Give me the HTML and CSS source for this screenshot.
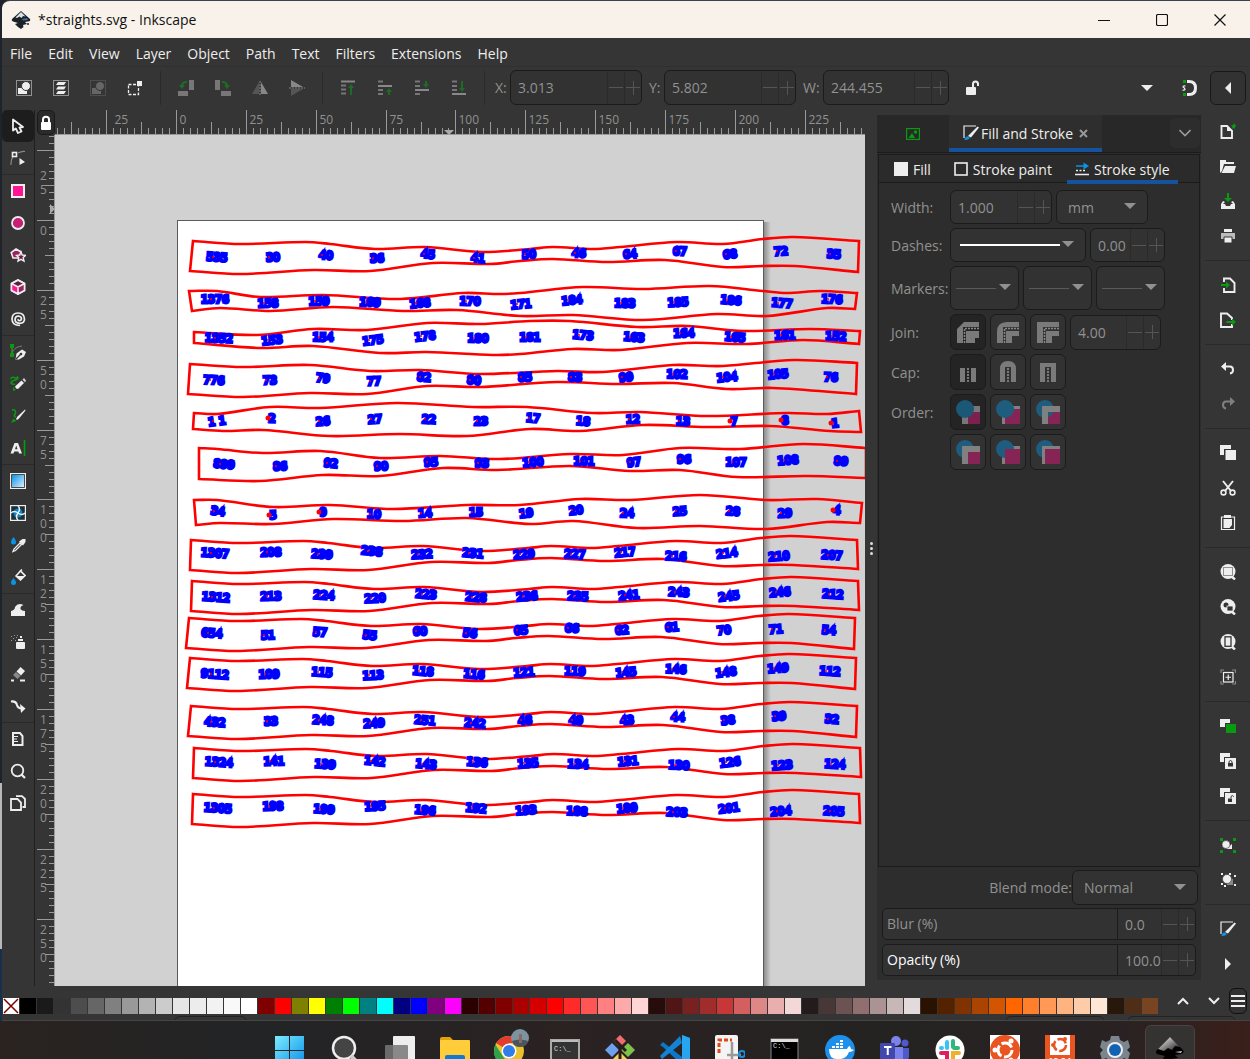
FILE: index.html
```html
<!DOCTYPE html>
<html lang="en">
<head>
    <meta charset="UTF-8">
    <meta name="viewport" content="width=device-width, initial-scale=1">
    <title>*straights.svg - Inkscape</title>
    <link rel="stylesheet" href="styles.css">
</head>
<body>
    <div class="window">
        <header class="titlebar">
            <svg class="app-logo" width="20" height="20" viewBox="0 0 20 20">
                <path d="M10 1 L19 9 Q20 11 17 11.500 L14 12 L16 14 L12 15 L12.500 17 L10 19 L7 17 L4 14 L7 13 L2 11.500 Q0 10.500 1 9 Z" fill="#1c2126"/>
                <path d="M10 2 L14.500 6.500 L12 6 L10.500 8 L8.500 6.500 L6 8 L4.500 7.500 Z" fill="#d9e2ea"/>
                <path d="M11 9 L16 8 L17 10 L12 10.500 Z" fill="#3d6ea8"/>
                <circle cx="17" cy="14" r="1" fill="#1c2126"/>
            </svg>
            <h1>*straights.svg - Inkscape</h1>
            <div class="window-buttons">
                <button aria-label="Minimize"><svg width="12" height="12"><path d="M0 6.500H12" stroke="#111"/></svg></button>
                <button aria-label="Maximize"><svg width="12" height="12"><rect x=".5" y=".5" width="11" height="11" rx="1.500" fill="none" stroke="#111" stroke-width="1.200"/></svg></button>
                <button aria-label="Close"><svg width="12" height="12"><path d="M.5 .5L11.500 11.500M11.500 .5L.5 11.500" stroke="#111" stroke-width="1.200"/></svg></button>
            </div>
        </header>

        <nav class="menubar">
            <a href="#">File</a>
            <a href="#">Edit</a>
            <a href="#">View</a>
            <a href="#">Layer</a>
            <a href="#">Object</a>
            <a href="#">Path</a>
            <a href="#">Text</a>
            <a href="#">Filters</a>
            <a href="#">Extensions</a>
            <a href="#">Help</a>
        </nav>

        <div class="toolbar">
            <div class="tool-group">
                <button aria-label="Select all"><svg width="16" height="16"><rect x=".5" y=".5" width="15" height="15" fill="none" stroke="#eee" stroke-dasharray="1 1"/><rect x="2" y="8" width="9" height="6" fill="#eee"/><circle cx="10" cy="6" r="4.500" fill="#eee" stroke="#353535"/></svg></button>
                <button aria-label="Select all in all layers"><svg width="16" height="16"><rect x=".5" y=".5" width="15" height="15" fill="none" stroke="#eee" stroke-dasharray="1 1"/><path d="M5 2H13L11 5H3ZM5 6.500H13L11 9.500H3ZM5 11H13L11 14H3Z" fill="#eee"/></svg></button>
                <button aria-label="Deselect" disabled><svg width="16" height="16"><rect x=".5" y=".5" width="15" height="15" fill="none" stroke="#666" stroke-dasharray="1 1"/><rect x="2" y="8" width="9" height="6" fill="#666"/><circle cx="10" cy="6" r="4.500" fill="#666" stroke="#353535"/></svg></button>
                <button aria-label="Touch selection"><svg width="16" height="16"><rect x="1.500" y="4.500" width="10" height="10" fill="none" stroke="#eee" stroke-width="1.300" stroke-dasharray="3 1.500"/><rect x="10" y="1" width="5" height="5" fill="#eee"/></svg></button>
            </div>
            <div class="tool-group">
                <button aria-label="Rotate left"><svg width="16" height="16"><path d="M11 0H16V10H11ZM0 11H10V16H0Z" fill="#777"/><path d="M9 2Q4 2 4 6" fill="none" stroke="#1d6b25" stroke-width="2"/><path d="M1 5H7L4 9Z" fill="#1d6b25"/></svg></button>
                <button aria-label="Rotate right"><svg width="16" height="16"><path d="M0 0H5V10H0ZM6 11H16V16H6Z" fill="#777"/><path d="M7 2Q12 2 12 6" fill="none" stroke="#1d6b25" stroke-width="2"/><path d="M9 5H15L12 9Z" fill="#1d6b25"/></svg></button>
                <button aria-label="Flip horizontal"><svg width="16" height="16"><path d="M7 2V14H0Z" fill="#555"/><path d="M9 2V14H16Z" fill="#888"/><path d="M8 1V16" stroke="#888" stroke-dasharray="2 1"/></svg></button>
                <button aria-label="Flip vertical"><svg width="16" height="16"><path d="M2 0L14 7H2Z" fill="#888"/><path d="M2 16L14 9H2Z" fill="#555"/><path d="M0 8H16" stroke="#888" stroke-dasharray="2 1"/></svg></button>
            </div>
            <div class="tool-group">
                <button aria-label="Raise to top"><svg width="16" height="16"><path d="M1 1.500H15" stroke="#888" stroke-width="2"/><path d="M1 5.500H6M1 9.500H6M1 13.500H6" stroke="#777" stroke-width="2"/><path d="M11 7V15" stroke="#1d6b25" stroke-width="2"/><path d="M8 8L11 4L14 8Z" fill="#1d6b25"/></svg></button>
                <button aria-label="Raise"><svg width="16" height="16"><path d="M1 6H15" stroke="#888" stroke-width="2"/><path d="M1 1.500H6M1 10H6M1 14H6" stroke="#777" stroke-width="2"/><path d="M12 10V15" stroke="#1d6b25" stroke-width="2"/><path d="M9 12L12 8L15 12Z" fill="#1d6b25"/></svg></button>
                <button aria-label="Lower"><svg width="16" height="16"><path d="M1 10H15" stroke="#888" stroke-width="2"/><path d="M1 1.500H6M1 6H6M1 14H6" stroke="#777" stroke-width="2"/><path d="M12 1V5" stroke="#1d6b25" stroke-width="2"/><path d="M9 4L12 8L15 4Z" fill="#1d6b25"/></svg></button>
                <button aria-label="Lower to bottom"><svg width="16" height="16"><path d="M1 14H15" stroke="#888" stroke-width="2"/><path d="M1 1.500H6M1 6H6M1 10H6" stroke="#777" stroke-width="2"/><path d="M11 1V9" stroke="#1d6b25" stroke-width="2"/><path d="M8 8L11 12L14 8Z" fill="#1d6b25"/></svg></button>
            </div>
            <div class="coords">
                <label for="pos-x">X:</label>
                <div class="spin"><input type="text" id="pos-x" value="3.013"><button class="minus" aria-label="Decrease X"></button><button class="plus" aria-label="Increase X"></button></div>
                <label for="pos-y">Y:</label>
                <div class="spin"><input type="text" id="pos-y" value="5.802"><button class="minus" aria-label="Decrease Y"></button><button class="plus" aria-label="Increase Y"></button></div>
                <label for="pos-w">W:</label>
                <div class="spin"><input type="text" id="pos-w" value="244.455"><button class="minus" aria-label="Decrease width"></button><button class="plus" aria-label="Increase width"></button></div>
                <button class="lock-ratio" aria-label="Lock ratio"><svg width="16" height="16"><rect x="1" y="7" width="10" height="8" rx="1" fill="#eee"/><path d="M8 8V4Q8 1.500 10.500 1.500Q13 1.500 13 4V6" fill="none" stroke="#eee" stroke-width="2"/></svg></button>
            </div>
            <div class="snap-tools">
                <button aria-label="More"><svg width="12" height="6"><path d="M0 0H12L6 6Z" fill="#eee"/></svg></button>
                <button aria-label="Snap"><svg width="16" height="18"><path d="M6 2.500H8Q14.500 2.500 14.500 9Q14.500 15.500 8 15.500H6" fill="none" stroke="#eee" stroke-width="3"/><path d="M4.500 7Q2 6.500 2 8Q4 9 4 10.500Q3.500 11.500 1.500 11" fill="none" stroke="#eee" stroke-width="1.200"/><rect x="2" y="1" width="3" height="3" fill="#0a9a12"/><rect x="2" y="14" width="3" height="3" fill="#0a9a12"/></svg></button>
                <button class="framed" aria-label="Hide snap bar"><svg width="6" height="12"><path d="M6 0V12L0 6Z" fill="#eee"/></svg></button>
            </div>
        </div>

        <main class="workspace">
            <aside class="toolbox">
                <div class="tools">
                    <button class="active" aria-label="Selector"><svg width="16" height="16"><path d="M3 1.500V12.500L5.800 10.500L8 15L11.500 13.500L9.500 9.500L13 9Z" fill="none" stroke="#eee" stroke-width="1.800" stroke-linejoin="round"/></svg></button>
                    <button aria-label="Node editor"><svg width="16" height="16"><path d="M1 15Q1 9 3 7M8 3Q12 1 15 1.500" fill="none" stroke="#888" stroke-width="1.200"/><rect x="2.500" y="2.500" width="4" height="4" fill="none" stroke="#eee" stroke-width="1.600"/><path d="M9.500 8L15 12L9.500 15Z" fill="#eee"/></svg></button>
                </div>
                <div class="tools">
                    <button aria-label="Rectangle"><svg width="16" height="16"><rect x="2" y="2" width="12" height="12" fill="#ff1493" stroke="#eee" stroke-width="2"/></svg></button>
                    <button aria-label="Ellipse"><svg width="16" height="16"><circle cx="8" cy="8" r="6" fill="#c71f76" stroke="#eee" stroke-width="1.800"/></svg></button>
                    <button aria-label="Star"><svg width="16" height="16"><path d="M6 2L11 5L9.500 11L3 11L1.200 5.500Z" fill="#a0215f" stroke="#eee" stroke-width="1.600"/><path d="M11 5L12.200 8L15.500 8.400L13.200 10.600L14 14L11 12.300L8 14L8.800 10.600L6.500 8.400L9.800 8Z" fill="#6e1c47" stroke="#eee" stroke-width="1.400"/></svg></button>
                    <button aria-label="3D box"><svg width="16" height="16"><path d="M8 1L14.500 4.500V11.500L8 15L1.500 11.500V4.500Z" fill="#5f2040" stroke="#eee" stroke-width="1.600"/><path d="M2 5L8 8V14.500L2 11.500Z" fill="#ff1493"/><path d="M14 5L8 8V14.500L14 11.500Z" fill="#a0215f"/><path d="M1.500 4.500L8 8L14.500 4.500M8 8V15M8 1L14.500 4.500V11.500L8 15L1.500 11.500V4.500Z" fill="none" stroke="#eee" stroke-width="1.600"/></svg></button>
                    <button aria-label="Spiral"><svg width="16" height="16"><path d="M10 14.500Q2 14.500 2 8Q2 2 8 2Q14.500 2 14.500 8.500Q14 12.500 9.500 12.300Q4.800 12 5 8.300Q5.300 5 8.500 5Q11.500 5.300 11.500 8Q11 10 9 9.700Q7.800 9.300 8.200 8" fill="none" stroke="#eee" stroke-width="1.700"/></svg></button>
                </div>
                <div class="tools">
                    <button aria-label="Pen"><svg width="16" height="16"><path d="M2 3V12M2 10Q3 3 12 2" fill="none" stroke="#777" stroke-width="1"/><path d="M0 0H4V4H0Z" fill="#0a9a12"/><path d="M0 9H4V13H0ZM1.500 3H2.500V10H1.500Z" fill="#0a9a12"/><path d="M5.500 15.500L6.500 9.500L12 5.500L16 8L14 12.500L9 15.500Z" fill="#eee"/><path d="M6 15L11 10" stroke="#353535" stroke-width="1.200"/><circle cx="11" cy="10" r="1.300" fill="#353535"/></svg></button>
                    <button aria-label="Pencil"><svg width="16" height="16"><path d="M.5 3Q2 .5 4 1.500T7.500 1Q9 3 5 4T1 7Q3 9 5 8" fill="none" stroke="#0a9a12" stroke-width="1.500"/><path d="M3 15L3 11L6 14Z" fill="#0a9a12"/><path d="M5 10.500L11.500 4.500L14 7L8 13Q5.500 13 5 10.500Z" fill="#eee"/><path d="M12.500 3.500L14 2L16 4.500L15 6.500Z" fill="#ccc"/></svg></button>
                    <button aria-label="Calligraphy"><svg width="16" height="16"><path d="M2 2Q6 1 5.500 5Q3 9 6 9" fill="none" stroke="#0a9a12" stroke-width="1.600"/><path d="M1 15L3.500 10.500L6.500 13Z" fill="#0a9a12"/><path d="M6 11L7.500 8.500L15 1.500L15.500 2.500L9 10.500L7 12Z" fill="#eee"/></svg></button>
                    <button aria-label="Text"><svg width="16" height="16"><path d="M.5 13.500L4.500 3H8L12 13.500H9L8.300 11.500H4.200L3.500 13.500ZM5 9.300H7.500L6.250 5.500Z" fill="#eee" fill-rule="evenodd"/><path d="M14.500 0V16" stroke="#0a9a12" stroke-width="1.600"/></svg></button>
                </div>
                <div class="tools">
                    <button aria-label="Gradient"><svg width="16" height="16"><defs><linearGradient id="grad" x1="0" y1="0" x2="1" y2="1"><stop offset="0" stop-color="#0a94e6"/><stop offset="1" stop-color="#d9efff"/></linearGradient></defs><rect x=".6" y=".6" width="14.800" height="14.800" fill="#222" stroke="#eee" stroke-width="1.200"/><rect x="2" y="2" width="12" height="12" fill="url(#grad)"/></svg></button>
                    <button aria-label="Mesh"><svg width="16" height="16"><rect x=".6" y=".6" width="14.800" height="14.800" fill="#1d3038" stroke="#eee" stroke-width="1.200"/><circle cx="8" cy="8" r="4.500" fill="#0a84cc"/><path d="M8 8Q11 4 8 1M8 8Q12 11 15 8M8 8Q5 12 8 15M8 8Q4 5 1 8" fill="none" stroke="#eee" stroke-width="1.500"/></svg></button>
                    <button aria-label="Dropper"><svg width="16" height="16"><path d="M3.500 0Q6 3 6 5A2.500 2.500 0 0 1 1 5Q1 3 3.500 0Z" fill="#0a94e6"/><path d="M3 14.500L4 12L10 6L11.500 7.500L5.500 13.500Z" fill="none" stroke="#eee" stroke-width="1.300"/><path d="M9 4.500L12.500 2L15.500 2L15.500 5L13 8.500Z" fill="#eee"/></svg></button>
                    <button aria-label="Paint bucket"><svg width="16" height="16"><path d="M3.500 9Q6 12 6 13.500A2.500 2.500 0 0 1 1 13.500Q1 12 3.500 9Z" fill="#0a94e6"/><path d="M6 7L10.500 2L15 6.500L10.500 11Z" fill="none" stroke="#eee" stroke-width="1.600"/><path d="M6 7H15L10.500 11.500Z" fill="#eee"/><path d="M10 2.500L12 .5" stroke="#eee" stroke-width="1.500"/></svg></button>
                </div>
                <div class="tools">
                    <button aria-label="Tweak"><svg width="16" height="16"><path d="M1 14V9Q5 8 5 5Q8 0 13.500 3Q10 4 10.500 7Q11.500 9 15 9V14Z" fill="#eee"/></svg></button>
                    <button aria-label="Spray"><svg width="16" height="16"><rect x="6" y="8" width="9" height="7" rx="1" fill="#eee"/><path d="M8 5H13V7H8ZM10 2H12V4H10Z" fill="#eee"/><path d="M1 2H2V3H1ZM4 1H5V2H4ZM3 4H4V5H3ZM6 3H7V4H6ZM1 6H2V7H1ZM5 6H6V7H5ZM7 1H8V2H7Z" fill="#999"/></svg></button>
                    <button aria-label="Eraser"><svg width="16" height="16"><path d="M10.500 1L15 5L11 9.500L6.500 5.500Z" fill="#eee"/><path d="M6 6L10.500 10L7.500 13L3 9Z" fill="#888"/><path d="M1 14.500H4M10 14.500H15" stroke="#eee" stroke-width="1.800"/></svg></button>
                    <button aria-label="Connector"><svg width="16" height="16"><path d="M1 3.500Q6 3 7 7Q8 10.500 12 10.500" fill="none" stroke="#eee" stroke-width="2.200"/><path d="M10 6L15.500 10.500L11 15Z" fill="#eee"/></svg></button>
                </div>
                <div class="tools">
                    <button aria-label="Measure"><svg width="16" height="16"><path d="M3 2H10L12.500 5V14H3Z" fill="none" stroke="#eee" stroke-width="2"/><path d="M4 5.500H8M4 8H7M4 10.500H8" stroke="#eee" stroke-width="1.200"/></svg></button>
                    <button aria-label="Zoom"><svg width="16" height="16"><circle cx="7.500" cy="7.500" r="5.800" fill="none" stroke="#eee" stroke-width="1.800"/><path d="M11.500 11.500L15 15" stroke="#eee" stroke-width="2.200"/></svg></button>
                    <button aria-label="Pages"><svg width="16" height="16"><path d="M1 4H7.500L11 7.500V15H1Z" fill="none" stroke="#eee" stroke-width="1.800"/><path d="M6 1.200H12L15 4V12H12.500" fill="none" stroke="#eee" stroke-width="1.800"/></svg></button>
                </div>
            </aside>

            <section class="canvas-area">
                <button class="guide-lock" aria-label="Lock guides"><svg width="12" height="16"><rect x="1" y="7" width="10" height="8" rx="1" fill="#fff"/><path d="M3 8V4.500Q3 1.800 6 1.800Q9 1.800 9 4.500V8" fill="none" stroke="#fff" stroke-width="2"/></svg></button>
                <svg class="ruler" id="ruler-h"></svg>
                <svg class="ruler" id="ruler-v"></svg>
                <svg class="canvas" id="canvas">
                    <defs>
                        <linearGradient id="page-shadow"><stop offset="0" stop-color="#8e8e8e"/><stop offset="1" stop-color="#d1d1d1"/></linearGradient>
                    </defs>
                    <rect x="709" y="87" width="7" height="100%" fill="url(#page-shadow)"/>
                    <rect x="122.500" y="85.500" width="586" height="1200" fill="#fff" stroke="#5b5b5b"/>
                    <g id="strips" transform="translate(-55 -135)"></g>
                </svg>
            </section>

            <div class="splitter"><i></i><i></i><i></i></div>

            <aside class="dock">
                <div class="dock-tabs">
                    <button class="dock-tab image-tab" aria-label="Image"><svg width="14" height="12"><rect x=".6" y=".6" width="12.800" height="10.800" fill="none" stroke="#0a9a12" stroke-width="1.200"/><path d="M2.500 10L6 5L9 10Z" fill="#0a9a12"/><circle cx="9.500" cy="4" r="1.800" fill="#0a9a12"/></svg></button>
                    <button class="dock-tab current"><svg width="16" height="16"><path d="M1 13V1H13" fill="none" stroke="#eee" stroke-width="1.200"/><path d="M5 11L14.500 1.500L16 2.500L8 12.500Z" fill="#eee"/><path d="M1.500 15Q2 11 5 11.500L7 13Q5 15.500 1.500 15Z" fill="#0a94e6"/></svg><span>Fill and Stroke</span><svg class="close" width="9" height="9"><path d="M1 1L8 8M8 1L1 8" stroke="#999" stroke-width="2"/></svg></button>
                    <button class="dock-menu" aria-label="Dialogs"><svg width="12" height="8"><path d="M.5 1L6 6.500L11.500 1" fill="none" stroke="#999" stroke-width="1.600"/></svg></button>
                </div>

                <div class="panel">
                    <div class="sub-tabs">
                        <button><svg width="14" height="14"><rect width="14" height="14" fill="#eee"/></svg>Fill</button>
                        <button><svg width="14" height="14"><rect x="1" y="1" width="12" height="12" fill="none" stroke="#eee" stroke-width="1.600"/></svg>Stroke paint</button>
                        <button class="current"><svg width="14" height="14"><path d="M1 4H9" stroke="#0a94e6" stroke-width="1.600"/><path d="M8.500 .5L14 4L8.500 7.500Z" fill="#0a94e6"/><path d="M1 8.500H10" stroke="#eee" stroke-width="1.400" stroke-dasharray="2 1.500"/><path d="M0 12.500H14" stroke="#eee" stroke-width="1.400"/></svg>Stroke style</button>
                    </div>

                    <form class="stroke-form">
                        <div class="row short">
                            <label for="stroke-width">Width:</label>
                            <div class="spin width-spin"><input type="text" id="stroke-width" value="1.000"><button type="button" class="minus" aria-label="Decrease"></button><button type="button" class="plus" aria-label="Increase"></button></div>
                            <div class="drop unit"><select aria-label="Unit"><option>mm</option><option>px</option></select></div>
                        </div>
                        <div class="row short">
                            <label for="dashes">Dashes:</label>
                            <div class="drop dashes"><select id="dashes"><option></option></select></div>
                            <div class="spin offset-spin"><input type="text" aria-label="Dash offset" value="0.00"><button type="button" class="minus" aria-label="Decrease"></button><button type="button" class="plus" aria-label="Increase"></button></div>
                        </div>
                        <div class="row markers">
                            <label for="marker-start">Markers:</label>
                            <div class="drop marker"><select id="marker-start"><option></option></select></div>
                            <div class="drop marker"><select aria-label="Mid marker"><option></option></select></div>
                            <div class="drop marker"><select aria-label="End marker"><option></option></select></div>
                        </div>
                        <div class="row">
                            <span class="row-label">Join:</span>
                            <button type="button" class="choice on" aria-label="Bevel join"><svg width="22" height="22"><path d="M0 22V8L7 1H22V6H6V22ZM14 22V13H22V17H18V22Z" fill="#7a7a7a"/><path d="M9 22V10H22V15H15V22Z" fill="#7a7a7a"/><path d="M7.500 22V7.500H22" fill="none" stroke="#888" stroke-width="1.500" stroke-dasharray="2 1"/></svg></button>
                            <button type="button" class="choice" aria-label="Round join"><svg width="22" height="22"><path d="M0 22V11Q0 1 10 1H22V6H6V22ZM9 22V10H22V15H15V22Z" fill="#7a7a7a"/><path d="M7.500 22V7.500H22" fill="none" stroke="#888" stroke-width="1.500" stroke-dasharray="2 1"/></svg></button>
                            <button type="button" class="choice" aria-label="Miter join"><svg width="22" height="22"><path d="M0 22V1H22V6H6V22ZM9 22V10H22V15H15V22Z" fill="#7a7a7a"/><path d="M7.500 22V7.500H22" fill="none" stroke="#888" stroke-width="1.500" stroke-dasharray="2 1"/></svg></button>
                            <div class="spin miter-spin"><input type="text" aria-label="Miter limit" value="4.00"><button type="button" class="minus" aria-label="Decrease"></button><button type="button" class="plus" aria-label="Increase"></button></div>
                        </div>
                        <div class="row">
                            <span class="row-label">Cap:</span>
                            <button type="button" class="choice on" aria-label="Butt cap"><svg width="22" height="22"><path d="M3 7H8V21H3ZM14 7H19V21H14Z" fill="#7a7a7a"/><path d="M11 7V21" stroke="#7a7a7a" stroke-width="2" stroke-dasharray="2 1"/></svg></button>
                            <button type="button" class="choice" aria-label="Round cap"><svg width="22" height="22"><path d="M3 21V8Q3 0 11 0Q19 0 19 8V21H14V6H8V21Z" fill="#7a7a7a"/><path d="M11 7V21" stroke="#7a7a7a" stroke-width="2" stroke-dasharray="2 1"/></svg></button>
                            <button type="button" class="choice" aria-label="Square cap"><svg width="22" height="22"><path d="M3 21V2H19V21H14V6H8V21Z" fill="#7a7a7a"/><path d="M11 7V21" stroke="#7a7a7a" stroke-width="2" stroke-dasharray="2 1"/></svg></button>
                        </div>
                        <div class="row">
                            <span class="row-label">Order:</span>
                            <button type="button" class="choice on" aria-label="Fill, stroke, markers"><svg width="24" height="24"><path d="M6 6H24V24H6Z" fill="#777"/><path d="M12 12H24V24H12Z" fill="#7c2050"/><circle cx="9" cy="9" r="9" fill="#1b5777"/></svg></button>
                            <button type="button" class="choice" aria-label="Stroke, fill, markers"><svg width="24" height="24"><path d="M6 6H24V24H6Z" fill="#808080"/><path d="M9 9H24V24H9Z" fill="#872456"/><circle cx="9" cy="9" r="9" fill="#1f5d7e"/></svg></button>
                            <button type="button" class="choice" aria-label="Fill, markers, stroke"><svg width="24" height="24"><path d="M12 12H24V24H12Z" fill="#872456"/><circle cx="9" cy="9" r="9" fill="#1f5d7e"/><path d="M6 6H24V12H12V24H6Z" fill="#808080"/></svg></button>
                        </div>
                        <div class="row">
                            <span class="row-label"></span>
                            <button type="button" class="choice" aria-label="Markers, fill, stroke"><svg width="24" height="24"><circle cx="9" cy="9" r="9" fill="#1f5d7e"/><path d="M6 6H24V24H6Z" fill="#808080"/><path d="M12 12H24V24H12Z" fill="#872456"/></svg></button>
                            <button type="button" class="choice" aria-label="Stroke, markers, fill"><svg width="24" height="24"><path d="M6 6H24V24H6Z" fill="#808080"/><circle cx="9" cy="9" r="9" fill="#1f5d7e"/><path d="M9 9H24V24H9Z" fill="#872456"/></svg></button>
                            <button type="button" class="choice" aria-label="Markers, stroke, fill"><svg width="24" height="24"><circle cx="9" cy="9" r="9" fill="#1f5d7e"/><path d="M6 6H24V24H6Z" fill="#808080"/><path d="M9 9H24V24H9Z" fill="#872456"/></svg></button>
                        </div>
                    </form>
                </div>

                <div class="blend">
                    <label for="blend">Blend mode:</label>
                    <div class="drop"><select id="blend"><option>Normal</option><option>Multiply</option></select></div>
                </div>
                <div class="slider-row">
                    <label for="blur">Blur (%)</label>
                    <input type="text" id="blur" value="0.0"><button class="minus" aria-label="Decrease blur"></button><button class="plus" aria-label="Increase blur"></button>
                </div>
                <div class="slider-row lit">
                    <label for="opacity">Opacity (%)</label>
                    <input type="text" id="opacity" value="100.0"><button class="minus" aria-label="Decrease opacity"></button><button class="plus" aria-label="Increase opacity"></button>
                </div>
            </aside>

            <aside class="commands">
                <div class="cmds">
                    <button aria-label="New"><svg width="16" height="16"><path d="M1.500 3H7L12 8V15H1.500Z" fill="none" stroke="#eee" stroke-width="1.900"/><path d="M7 3V8H12Z" fill="#eee"/><path d="M14 0L15 2L17 2L15 4L15 6L14 5L12 6L12.500 4L11 2.500L13 2Z" fill="#0a9a12"/></svg></button>
                    <button aria-label="Open"><svg width="16" height="16"><path d="M0 15V2H6V4H14V6H4L2 13Z" fill="#eee"/><path d="M5 8H16L14 15H1.500Z" fill="#eee"/></svg></button>
                    <button aria-label="Save"><svg width="16" height="16"><path d="M8 0V6" stroke="#0a9a12" stroke-width="2"/><path d="M4 5H12L8 9Z" fill="#0a9a12"/><path d="M3 8L1 11V16H15V11L13 8L11 9L13 11H11L10 13H6L5 11H3L5 9Z" fill="#eee"/></svg></button>
                    <button aria-label="Print"><svg width="16" height="16"><path d="M4 1H12V4H4Z" fill="#eee"/><path d="M1 5H15V11H1Z" fill="#bbb"/><path d="M4 9H12V15H4Z" fill="#eee" stroke="#353535"/></svg></button>
                </div>
                <div class="cmds">
                    <button aria-label="Import"><svg width="16" height="16"><path d="M4 5V1.500H10L14.500 6V15H4V11" fill="none" stroke="#eee" stroke-width="1.900"/><path d="M1 8H6" stroke="#0a9a12" stroke-width="2"/><path d="M6 4.500L10 8L6 11.500Z" fill="#0a9a12"/></svg></button>
                    <button aria-label="Export"><svg width="16" height="16"><path d="M12 12V15H1V1.500H7L12 6V8" fill="none" stroke="#eee" stroke-width="1.900"/><path d="M6.500 10H12" stroke="#0a9a12" stroke-width="2"/><path d="M12 6.500L16 10L12 13.500Z" fill="#0a9a12"/></svg></button>
                </div>
                <div class="cmds">
                    <button aria-label="Undo"><svg width="16" height="16"><path d="M4 5.500H10Q13 5.500 13 9Q13 12 10 12.500" fill="none" stroke="#eee" stroke-width="2"/><path d="M6 1V10L1 5.500Z" fill="#eee"/></svg></button>
                    <button aria-label="Redo"><svg width="16" height="16"><path d="M12 5.500H6Q3 5.500 3 9Q3 12 6 12.500" fill="none" stroke="#808080" stroke-width="2"/><path d="M10 1V10L15 5.500Z" fill="#808080"/></svg></button>
                </div>
                <div class="cmds">
                    <button aria-label="Duplicate"><svg width="16" height="16"><path d="M0 0H11V4H4V10H0Z" fill="#eee"/><rect x="5.500" y="5" width="10.500" height="10" fill="#eee"/></svg></button>
                    <button aria-label="Cut"><svg width="16" height="16"><path d="M3 1L11 11M13 1L5 11" stroke="#eee" stroke-width="2"/><circle cx="3.500" cy="12.500" r="2.400" fill="none" stroke="#eee" stroke-width="1.600"/><circle cx="12.500" cy="12.500" r="2.400" fill="none" stroke="#eee" stroke-width="1.600"/></svg></button>
                    <button aria-label="Paste"><svg width="16" height="16"><path d="M1.500 2V14.500H14.500V2Z" fill="none" stroke="#eee" stroke-width="1.200"/><path d="M4 0H11V3H4ZM3.500 4H12V10L9.500 13H3.500Z" fill="#eee"/></svg></button>
                </div>
                <div class="cmds">
                    <button aria-label="Zoom selection"><svg width="16" height="16"><circle cx="8" cy="7.500" r="7.500" fill="#eee"/><path d="M11 12L15 15.500" stroke="#eee" stroke-width="2.400"/><rect x="3.500" y="3.500" width="9" height="8" fill="none" stroke="#333" stroke-dasharray="1 1"/></svg></button>
                    <button aria-label="Zoom drawing"><svg width="16" height="16"><circle cx="8" cy="7.500" r="7.500" fill="#eee"/><path d="M11 12L15 15.500" stroke="#eee" stroke-width="2.400"/><circle cx="6" cy="6" r="2.500" fill="#333"/><rect x="7" y="7" width="6" height="5" fill="#333" stroke="#eee" stroke-width=".8"/></svg></button>
                    <button aria-label="Zoom page"><svg width="16" height="16"><circle cx="8" cy="7.500" r="7.500" fill="#eee"/><path d="M11 12L15 15.500" stroke="#eee" stroke-width="2.400"/><rect x="5" y="2.800" width="6" height="9.500" fill="#eee" stroke="#333" stroke-width="1.300"/></svg></button>
                    <button aria-label="Center page"><svg width="16" height="16"><path d="M1 4V1H4M12 1H15.500V4M1 12V15H4M12 15H15.500V12" fill="none" stroke="#888" stroke-width="1.200"/><rect x="3.500" y="3.500" width="9.500" height="9.500" fill="none" stroke="#eee" stroke-width="1.200"/><path d="M8.250 5.500V11M5.500 8.250H11" stroke="#eee" stroke-width="1.200"/></svg></button>
                </div>
                <div class="cmds">
                    <button aria-label="Clone"><svg width="16" height="16"><path d="M0 1H10V5H5V9H0Z" fill="#eee"/><rect x="6" y="6" width="10" height="9" fill="#0a9a12"/></svg></button>
                    <button aria-label="Group"><svg width="16" height="16"><path d="M0 0H10V4H4V9H0Z" fill="#eee"/><rect x="5" y="5" width="11" height="11" fill="#eee"/><path d="M8 10H13V13.500H8Z" fill="#333"/><path d="M9 10V8.500Q10.500 6.500 12 8.500V10" fill="none" stroke="#333"/></svg></button>
                    <button aria-label="Ungroup"><svg width="16" height="16"><path d="M0 0H10V4H4V9H0Z" fill="#eee"/><rect x="5" y="5" width="11" height="11" fill="#eee"/><path d="M8 10.500H12V14H8Z" fill="#333"/><path d="M11 10V8.500Q12.500 6.500 13.500 8.500V9" fill="none" stroke="#333"/></svg></button>
                </div>
                <div class="cmds">
                    <button aria-label="Group objects"><svg width="16" height="16"><path d="M0 1H3V4H0ZM13 1H16V4H13ZM0 13H3V16H0ZM13 13H16V16H13Z" fill="#0a9a12"/><path d="M6 12H12V7Z" fill="#eee"/><circle cx="6" cy="7.500" r="4" fill="#eee" stroke="#353535" stroke-width=".6"/></svg></button>
                    <button aria-label="Ungroup objects"><svg width="16" height="16"><path d="M7 7H13V13H7Z" fill="#888"/><circle cx="7" cy="7" r="4.500" fill="#eee" stroke="#353535" stroke-width=".6"/><path d="M1 1H3V3H1ZM9 1H11V3H9ZM14 3H16V5H14ZM1 11H3V13H1ZM14 12H16V14H14ZM4 13H6V15H4Z" fill="#eee"/></svg></button>
                </div>
                <div class="cmds">
                    <button aria-label="Fill and stroke"><svg width="16" height="16"><path d="M1 13V1H13" fill="none" stroke="#eee" stroke-width="1.200"/><path d="M5 11L14.500 1.500L16 2.500L8 12.500Z" fill="#eee"/><path d="M1.500 15Q2 11 5 11.500L7 13Q5 15.500 1.500 15Z" fill="#0a94e6"/></svg></button>
                    <button aria-label="More commands"><svg width="6" height="12"><path d="M0 0V12L6 6Z" fill="#eee"/></svg></button>
                </div>
            </aside>
        </main>

        <footer class="palette">
            <div class="swatches" id="swatches"></div>
            <div class="palette-buttons">
                <button aria-label="Previous colors"><svg width="12" height="8"><path d="M1 7L6 2L11 7" fill="none" stroke="#eee" stroke-width="2"/></svg></button>
                <button aria-label="Next colors"><svg width="12" height="8"><path d="M1 1L6 6L11 1" fill="none" stroke="#eee" stroke-width="2"/></svg></button>
                <button class="framed" aria-label="Palette menu"><svg width="14" height="14"><path d="M0 2H14M0 7H14M0 12H14" stroke="#eee" stroke-width="2"/></svg></button>
            </div>
        </footer>
        <div class="statusbar"><span class="style-box"></span><span class="zoom-box"></span><span class="rotate-box"></span></div>
    </div>

    <nav class="taskbar">
        <button aria-label="Start"><svg width="30" height="30"><defs><linearGradient id="win" x1="0" y1="0" x2="1" y2="1"><stop offset="0" stop-color="#7cecff"/><stop offset="1" stop-color="#0a90ea"/></linearGradient></defs><path d="M0 1H14V15H0ZM15 1H29V15H15ZM0 16H14V30H0ZM15 16H29V30H15Z" fill="url(#win)"/></svg></button>
        <button aria-label="Search"><svg width="30" height="30"><circle cx="14" cy="13" r="11" fill="#444" stroke="#eee" stroke-width="2.500"/><path d="M21 21L28 28" stroke="#ccc" stroke-width="4"/></svg></button>
        <button aria-label="Task view"><svg width="30" height="30"><rect x="8" y="1" width="22" height="24" rx="1" fill="#eee"/><rect x="0" y="10" width="23" height="20" rx="1" fill="#777" opacity=".85"/></svg></button>
        <button aria-label="File Explorer"><svg width="30" height="30"><path d="M0 4Q0 2 2 2H10L13 5V12H0Z" fill="#e3a208"/><rect y="5" width="30" height="25" rx="1" fill="#fecd39"/><rect x="5" y="20" width="20" height="10" rx="2" fill="#1279d3"/></svg></button>
        <button aria-label="Chrome"><svg width="40" height="36" viewBox="0 0 40 36"><circle cx="19" cy="22" r="15" fill="#eac02c"/><path d="M19 22L6 14Q11 7 19 7Q28 7 32 14H19Z" fill="#e33b2e"/><path d="M5 15L14 29L19 36Q4 36 4 22Q4 18 6 14Z" fill="#2ba24c"/><circle cx="19" cy="22" r="7.500" fill="#fff"/><circle cx="19" cy="22" r="6" fill="#2f7de9"/><circle cx="30" cy="9" r="9" fill="#7d93a0"/><path d="M22 12Q30 9 38 12Q36 18 30 18Q24 18 22 12Z" fill="#4b5560"/><rect x="29" y="5" width="3" height="9" fill="#8d6a60"/></svg></button>
        <button aria-label="Terminal"><svg width="30" height="30"><rect x="1" y="5" width="28" height="24" fill="#333" stroke="#aaa" stroke-width="2"/><path d="M2 5H28V7H2Z" fill="#bbb"/><text x="4" y="16" class="tiny">C:\_</text></svg></button>
        <button aria-label="Git"><svg width="30" height="30"><path d="M15 0L21 6L15 12L9 6Z" fill="#ef6e6e"/><path d="M7 8L14 15L7 22L0 15Z" fill="#6ea0ef"/><path d="M23 8L30 15L23 22L16 15Z" fill="#7dc24b"/><path d="M15 17L22 24L15 30L8 24Z" fill="#f0d64e"/><path d="M10 5L21 16M15 10V24" stroke="#2a1c1c" stroke-width="3"/></svg></button>
        <button aria-label="VS Code"><svg width="30" height="30"><path d="M22 0L30 3V27L22 30L3 12L0 10L3 7L22 22Z" fill="#0a78c8"/><path d="M22 8L2 24L0 21L20 1Z" fill="#1583d5"/><path d="M22 0L30 3V27L22 30Z" fill="#28a5ef"/></svg></button>
        <button aria-label="Snipping Tool"><svg width="30" height="30"><rect x="0" y="0" width="23" height="26" rx="2" fill="#f4f4f4"/><path d="M4 18V5H17" fill="none" stroke="#dc4a15" stroke-width="3" stroke-dasharray="4 2"/><path d="M17 7V26M12 20H26" stroke="#999" stroke-width="2.500"/><circle cx="27" cy="19" r="3" fill="none" stroke="#1b8fdc" stroke-width="2"/><path d="M17 25V30" stroke="#1b8fdc" stroke-width="3"/></svg></button>
        <button aria-label="Command Prompt"><svg width="30" height="30"><rect x="1" y="4" width="27" height="24" fill="#000" stroke="#888"/><path d="M1 4H28V7H1Z" fill="#ddd"/><text x="3" y="13" class="tiny">C:\_</text></svg></button>
        <button aria-label="Docker"><svg width="30" height="30"><circle cx="15" cy="15" r="15" fill="#1d90ec"/><path d="M4 14H22Q23 11 25 11L26 14L29 15Q27 17 24 17Q21 25 12 24Q4 24 4 14Z" fill="#fff"/><path d="M7 11H10V13H7ZM11 11H14V13H11ZM15 11H18V13H15ZM11 8H14V10H11ZM15 8H18V10H15ZM15 5H18V7H15Z" fill="#fff"/></svg></button>
        <button aria-label="Teams"><svg width="30" height="30"><circle cx="16" cy="6" r="5" fill="#7b83eb"/><circle cx="25" cy="8" r="3.500" fill="#5059c9"/><path d="M19 13H29V22Q28 27 22 26Z" fill="#5059c9"/><path d="M10 12H23V24Q21 30 14 29Z" fill="#7b83eb"/><rect x="0" y="8" width="15" height="16" rx="1" fill="#4048ae"/><path d="M4 12H11.500M7.750 12V20" stroke="#fff" stroke-width="2"/></svg></button>
        <button aria-label="Slack"><svg width="30" height="30"><circle cx="15" cy="15" r="14.500" fill="#fff"/><g stroke-width="4" stroke-linecap="round"><path d="M12 7V13M6 13H7" stroke="#36c5f0"/><path d="M18 6V12M23 13H19" stroke="#2eb67d"/><path d="M6 18H12V24" stroke="#e01e5a" fill="none"/><path d="M18 24V18H24" stroke="#ecb22e" fill="none"/></g></svg></button>
        <button aria-label="Ubuntu"><svg width="30" height="30"><rect width="30" height="30" fill="#fff"/><circle cx="15" cy="15" r="15" fill="#e95420"/><circle cx="15" cy="15" r="7" fill="none" stroke="#fff" stroke-width="3" stroke-dasharray="12 2.600"/><circle cx="21" cy="6" r="2.500" fill="#fff"/><circle cx="5" cy="15" r="2.500" fill="#fff"/><circle cx="21" cy="25" r="2.500" fill="#fff"/></svg></button>
        <button aria-label="Ubuntu 18.04"><svg width="30" height="30"><rect width="30" height="30" fill="#e95420"/><rect x="5" width="20" height="20" fill="#fff"/><circle cx="15" cy="10" r="6" fill="none" stroke="#e95420" stroke-width="2.500" stroke-dasharray="10 2.500"/><circle cx="20" cy="4" r="2" fill="#e95420"/><circle cx="8" cy="10" r="2" fill="#e95420"/><text x="3" y="29" class="release">18.04</text></svg></button>
        <button aria-label="Settings"><svg width="30" height="30"><path d="M11 1H19L20 5L24 7L28 5L30 12L27 15L30 18L28 25L24 23L20 26L19 29H11L10 26L6 23L2 25L0 18L3 15L0 12L2 5L6 7L10 5Z" fill="#7b858e"/><circle cx="15" cy="15" r="8" fill="#eee"/><circle cx="15" cy="15" r="6" fill="#1262b4"/></svg></button>
        <button class="running" aria-label="Inkscape"><svg width="30" height="30"><defs><linearGradient id="ink" x1="0" y1="0" x2="1" y2="1"><stop offset="0" stop-color="#fff"/><stop offset=".8" stop-color="#444"/></linearGradient></defs><path d="M15 1L28 14Q30 17 26 18L20 19L23 22L16 23L12 26L8 22L10 20L2 18Q0 16 2 14Z" fill="#000"/><path d="M15 1L25 11L20 10L17 14L13 12L9 15L3 13Z" fill="url(#ink)"/><path d="M20 16L27 15L26 17Z" fill="#ccc"/></svg></button>
    </nav>

    <script src="script.js"></script>
</body>
</html>
```
FILE: styles.css
```css
:root {
    --window: #353535;
    --panel: #2d2d2d;
    --dark: #282828;
    --field: #323232;
    --edge: #1b1b1b;
    --line: #2a2a2a;
    --text: #eeeeec;
    --dim: #919190;
    --accent: #15539e;
}

* {
    box-sizing: border-box;
    margin: 0;
    padding: 0;
}

body {
    display: flex;
    flex-direction: column;
    height: 100vh;
    overflow: hidden;
    padding-left: 2px;
    background: linear-gradient(#1f242c 0 783px, #b8b8b8 783px 949px, #16304e 949px);
    color: var(--text);
    font-family: "Open Sans", "Noto Sans", sans-serif;
    font-size: 14px;
}

button {
    display: flex;
    align-items: center;
    justify-content: center;
    background: none;
    border: none;
    color: inherit;
    font: inherit;
}

svg {
    display: block;
    flex: none;
}

input,
select {
    min-width: 0;
    background: none;
    border: none;
    outline: none;
    color: var(--dim);
    font: inherit;
}

.window {
    flex: 1;
    min-height: 0;
    display: flex;
    flex-direction: column;
    background: var(--window);
    border-top: 1px solid #3b4150;
    border-bottom: 1px solid #454545;
    border-radius: 8px 0 0 0;
    overflow: hidden;
}

/* title and menus */
.titlebar {
    flex: none;
    display: flex;
    align-items: center;
    height: 37px;
    padding-left: 9px;
    background: #f8f2eb;
    color: #111;
}

.titlebar h1 {
    flex: 1;
    margin-left: 7px;
    font-size: 14px;
    font-weight: 400;
}

.window-buttons {
    display: flex;
    padding-right: 1px;
}

.window-buttons button {
    width: 58px;
    height: 36px;
}

.menubar {
    flex: none;
    display: flex;
    align-items: center;
    gap: 16px;
    height: 29px;
    padding: 2px 8px 0;
    border-bottom: 1px solid #303030;
}

.menubar a {
    color: var(--text);
    text-decoration: none;
}

/* tool controls bar */
.toolbar {
    flex: none;
    display: flex;
    align-items: center;
    height: 43px;
    padding: 0 0 2px 3px;
}

.tool-group {
    display: flex;
    margin-right: 6px;
    padding-right: 7px;
    border-right: 1px solid var(--line);
}

.tool-group button {
    width: 37px;
    height: 34px;
}

.coords {
    display: flex;
    align-items: center;
    padding-left: 4px;
}

.coords label {
    width: 14px;
    margin-right: 1px;
    color: var(--dim);
}

.coords label[for="pos-w"] {
    width: 19px;
}

.coords .spin {
    width: 132px;
    margin-right: 7px;
}

.coords .spin:nth-of-type(3) {
    width: 126px;
    margin-right: 6px;
}

.lock-ratio {
    width: 36px;
    height: 34px;
}

.snap-tools {
    display: flex;
    align-items: center;
    margin-left: auto;
    padding-right: 4px;
}

.snap-tools button {
    width: 42px;
    height: 34px;
}

.snap-tools .framed {
    width: 36px;
}

.framed {
    border: 1px solid #181818;
    border-radius: 6px;
    background: #323232;
}

.spin {
    display: flex;
    height: 35px;
    background: var(--field);
    border: 1px solid var(--edge);
    border-radius: 6px;
    overflow: hidden;
}

.spin input {
    flex: 1;
    padding-left: 7px;
}

.minus,
.plus {
    flex: none;
    width: 17px;
    border-left: 1px solid var(--line);
    background: linear-gradient(#555, #555) center / 14px 1px no-repeat;
}

.plus {
    background: linear-gradient(#555, #555) center / 14px 1px no-repeat,
                linear-gradient(#555, #555) center / 1px 14px no-repeat;
}

/* work area */
.workspace {
    flex: 1;
    min-height: 0;
    display: flex;
}

.toolbox {
    flex: none;
    width: 33px;
    border-right: 1px solid #1f1f1f;
}

.tools {
    border-bottom: 1px solid var(--line);
}

.tools:last-child {
    border-bottom: none;
}

.tools button {
    width: 32px;
    height: 32px;
}

.tools .active {
    background: #1d1d1d;
    border-radius: 5px;
}

.canvas-area {
    flex: 1;
    min-width: 0;
    display: grid;
    grid-template-columns: 20px 1fr;
    grid-template-rows: 25px 1fr;
}

.guide-lock {
    width: 18px;
    margin-left: 2px;
    border: 1px solid #1a1a1a;
    border-radius: 5px;
    background: #2a2a2a;
}

.ruler {
    width: 100%;
    height: 100%;
    min-height: 0;
    font-size: 12px;
}

.ruler line {
    stroke: #9a9a9a;
}

.ruler text {
    fill: var(--dim);
}

.ruler path {
    fill: #a9a9a9;
}

.canvas {
    width: 100%;
    height: 100%;
    min-height: 0;
    background: #d1d1d1;
}

.canvas .strip {
    fill: none;
    stroke: #f00;
    stroke-width: 2.6px;
}

.canvas circle {
    fill: #f00;
}

.canvas text {
    fill: #00f;
    stroke: #00f;
    stroke-width: 3px;
    font-family: "DejaVu Sans", sans-serif;
    font-size: 11px;
    text-anchor: middle;
}

.splitter {
    flex: none;
    display: flex;
    flex-direction: column;
    align-items: center;
    justify-content: center;
    gap: 2px;
    width: 12px;
}

.splitter i {
    width: 3px;
    height: 3px;
    border-radius: 50%;
    background: #ddd;
}

/* dialog dock */
.dock {
    flex: none;
    width: 324px;
    margin: 5px 0 6px;
    display: flex;
    flex-direction: column;
    background: var(--panel);
}

.dock-tabs {
    display: flex;
    height: 38px;
    background: var(--dark);
    border-bottom: 1px solid var(--edge);
}

.dock-tab {
    height: 37px;
}

.image-tab {
    width: 72px;
}

.dock-tab.current {
    width: 153px;
    gap: 2px;
    padding-top: 3px;
    background: #2e2e2e;
    border-bottom: 4px solid var(--accent);
}

.dock-tab .close {
    margin-left: 4px;
}

.dock-menu {
    width: 30px;
    height: 30px;
    margin: 3px 1px 0 auto;
    border-radius: 5px;
    background: #2d2d2d;
}

.panel {
    flex: 1;
    min-height: 0;
    margin: 1px 1px 0;
    border: 1px solid var(--edge);
}

.sub-tabs {
    display: flex;
    height: 28px;
    padding-left: 7px;
    background: #2b2b2b;
    border-bottom: 1px solid var(--edge);
}

.sub-tabs button {
    gap: 5px;
    height: 29px;
    margin-right: 7px;
    padding: 3px 8px 0;
    border-bottom: 4px solid transparent;
    white-space: nowrap;
}

.sub-tabs .current {
    border-bottom-color: var(--accent);
}

.stroke-form {
    display: flex;
    flex-direction: column;
    gap: 4px;
    padding: 7px 12px;
}

.row {
    display: flex;
    align-items: center;
    gap: 4px;
    height: 36px;
    color: var(--dim);
}

.row.short,
.row.short .spin,
.row.short .drop {
    height: 34px;
}

.row.markers {
    height: 44px;
}

.row label,
.row-label {
    flex: none;
    width: 55px;
    white-space: nowrap;
}

.row .width-spin {
    width: 102px;
}

.row .offset-spin {
    width: 75px;
}

.row .miter-spin {
    width: 91px;
}

.drop {
    position: relative;
    height: 35px;
    background: var(--field);
    border: 1px solid var(--edge);
    border-radius: 6px;
}

.drop select {
    width: 100%;
    height: 100%;
    padding-left: 11px;
    appearance: none;
}

.drop::after {
    content: '';
    position: absolute;
    top: 50%;
    right: 11px;
    margin-top: -4px;
    border: 6px solid transparent;
    border-top-color: var(--dim);
    border-bottom: none;
    pointer-events: none;
}

.drop.unit {
    width: 92px;
}

.drop.dashes {
    width: 136px;
}

.drop.dashes select {
    background: linear-gradient(#fff, #fff) 9px center / 100px 2px no-repeat;
}

.drop.marker {
    width: 69px;
    height: 44px;
}

.drop.marker select {
    background: linear-gradient(#5a5a5a, #5a5a5a) 5px center / 40px 1px no-repeat;
}

.drop.marker::after {
    right: 7px;
}

.choice {
    width: 36px;
    height: 36px;
    border: 1px solid var(--edge);
    border-radius: 6px;
    background: var(--field);
}

.choice.on {
    background: #242424;
}

.blend {
    display: flex;
    align-items: center;
    justify-content: flex-end;
    height: 35px;
    margin: 3px 3px 3px 0;
    color: var(--dim);
}

.blend .drop {
    width: 126px;
}

.slider-row {
    display: flex;
    height: 32px;
    margin: 0 5px 4px;
    background: var(--field);
    border: 1px solid var(--edge);
    border-radius: 5px;
    color: var(--dim);
}

.slider-row label {
    flex: 1;
    padding-left: 4px;
    line-height: 30px;
    border-right: 1px solid var(--edge);
}

.slider-row input {
    width: 43px;
    padding-left: 7px;
}

.slider-row.lit label {
    color: #fff;
}

/* right hand command bar */
.commands {
    flex: none;
    width: 49px;
    padding: 3px 0 0 4px;
}

.cmds {
    margin-bottom: 6px;
    padding-bottom: 7px;
    border-bottom: 1px solid var(--line);
}

.cmds:last-child {
    border-bottom: none;
}

.cmds button {
    width: 45px;
    height: 35px;
}

/* palette */
.palette {
    flex: none;
    display: flex;
    align-items: center;
    justify-content: space-between;
    height: 29px;
    padding: 0 3px 0 1px;
}

.swatches {
    display: flex;
    gap: 1px;
    padding-top: 11px;
}

.swatches button {
    width: 16px;
    height: 16px;
}

.palette-buttons {
    display: flex;
    align-items: center;
}

.palette-buttons button {
    width: 31px;
    height: 26px;
}

.palette-buttons .framed {
    width: 18px;
    border-color: #111;
}

.statusbar {
    flex: none;
    display: flex;
    height: 5px;
    padding-top: 1px;
    overflow: hidden;
}

.statusbar span {
    flex: none;
    height: 30px;
    border: 1px solid #222;
    border-radius: 6px;
}

.style-box {
    width: 73px;
    margin-left: 172px;
}

.zoom-box {
    width: 100px;
    margin-left: auto;
}

.rotate-box {
    width: 109px;
    margin: 0 14px 0 22px;
}

/* desktop taskbar */
.taskbar {
    flex: none;
    display: flex;
    justify-content: flex-end;
    gap: 5px;
    height: 38px;
    margin-left: -2px;
    padding: 4px 55px 0 0;
    overflow: hidden;
    background: linear-gradient(90deg, #2a2320, #222426 20%, #2b2222 45%, #242322 70%, #2a2222 90%, #3a1f1a);
}

.taskbar button {
    align-items: flex-start;
    flex: none;
    width: 50px;
    height: 50px;
    padding-top: 10px;
}

.taskbar button[aria-label="Chrome"] {
    padding-top: 4px;
}

.taskbar .running {
    border: 1px solid #484444;
    border-radius: 6px;
    background: #353232;
}

.tiny {
    fill: #ddd;
    font-size: 7px;
    font-family: "Liberation Mono", monospace;
}

.release {
    fill: #fff;
    font-size: 9px;
    font-weight: 700;
}
```
FILE: script.js
```js
var SVG = 'http://www.w3.org/2000/svg';

function add(parent, name, attrs, text) {
    var el = document.createElementNS(SVG, name);
    for (var key in attrs) el.setAttribute(key, attrs[key]);
    if (text !== undefined) el.textContent = text;
    parent.appendChild(el);
}

// Rulers: one tick per 2.5 mm, labelled every 25 mm
var STEP = 69.87;

function drawRulers() {
    var h = document.getElementById('ruler-h');
    var v = document.getElementById('ruler-v');
    var i, p;
    for (i = -17; i < 100; i++) {
        p = Math.round(121 + i * STEP / 10) + 0.5;
        if (p < 2) continue;
        add(h, 'line', { x1: p, x2: p, y1: i % 10 === 0 ? 0 : i % 5 === 0 ? 12 : 18, y2: 24 });
        if (i % 10 === 0) {
            add(h, 'text', { x: p + (i < 0 ? 8 : 3), y: 14 }, Math.abs(i * 2.5));
        }
    }
    add(h, 'line', { x1: 0, x2: '100%', y1: 24.5, y2: 24.5 });
    add(h, 'path', { d: 'M389 20H399L394 25Z' });

    for (i = -12; i < 110; i++) {
        p = Math.round(85 + i * STEP / 10) + 0.5;
        add(v, 'line', { y1: p, y2: p, x1: i % 10 === 0 ? 2 : i % 5 === 0 ? 10 : 14, x2: 19 });
        if (i % 10 === 0) {
            String(Math.abs(i * 2.5)).split('').forEach(function (digit, n) {
                var shift = i < 0 ? 15 : 0;
                add(v, 'text', { x: 5, y: p + 14 + shift + n * 14 }, digit);
            });
        }
    }
    add(v, 'line', { x1: 19.5, x2: 19.5, y1: 0, y2: '100%' });
    add(v, 'path', { d: 'M15 69L20 74L15 79Z' });
}

// Smooth curve through the points of one edge
function curve(pts) {
    var d = '';
    for (var i = 0; i < pts.length - 1; i++) {
        var a = pts[i - 1] || pts[i], b = pts[i], c = pts[i + 1], e = pts[i + 2] || c;
        var t = (c[0] - b[0]) / 3;
        var s1 = (c[1] - a[1]) / (c[0] - a[0]);
        var s2 = (e[1] - b[1]) / (e[0] - b[0]);
        d += 'C' + (b[0] + t) + ' ' + (b[1] + s1 * t) + ' ' + (c[0] - t) + ' ' + (c[1] - s2 * t) + ' ' + c[0] + ' ' + c[1];
    }
    return d;
}

function points(text, dx, dy) {
    return text.split(' ').map(function (pair) {
        var xy = pair.split(',');
        return [+xy[0] + dx, +xy[1] + dy];
    });
}

// Angle of an edge at x, in degrees
function tilt(pts, x) {
    for (var i = 1; i < pts.length - 1; i++) {
        if (x < pts[i][0]) break;
    }
    return Math.atan2(pts[i][1] - pts[i - 1][1], pts[i][0] - pts[i - 1][0]) * 180 / Math.PI;
}

var WIDE_TOP = '193,241 240,244 305,242 330,244 375,249 425,247 482,252 530,249 553,247 593,249 620,247 677,242 723,244 763,239 793,237 859,241';
var WIDE_BOTTOM = '190,271 240,274 313,270 370,271 433,263 490,264 520,261 553,259 607,262 665,260 723,267 763,266 795,266 858,272';
var BOX_BOTTOM = '192,271 240,274 313,270 370,271 433,263 490,264 520,261 553,259 607,262 665,260 723,267 763,266 795,266 860,270';

// Each strip: top edge, bottom edge, dx, dy, then label,x,y triples
var strips = [
    [WIDE_TOP, WIDE_BOTTOM, 0, 0,
        '535,217,257 30,273,257 40,326,255 36,377,258 45,428,254 41,478,258 50,529,254 46,579,253 64,630,254 67,680,251 68,730,254 72,781,251 35,834,254'],
    ['189,291 217,291 260,297 323,295 400,299 463,293 500,294 520,293 583,287 643,289 710,286 763,291 787,293 820,291 857,293',
        '192,311 220,308 270,311 333,307 403,311 457,310 520,316 573,315 643,320 717,314 767,316 827,308 855,309', 0, 0,
        '1376,215,299 158,268,303 159,319,301 169,370,302 168,420,303 170,470,301 171,521,304 184,572,300 183,625,303 185,678,302 186,731,300 177,782,303 176,832,299'],
    ['194,332 257,335 313,329 367,330 427,323 480,324 530,321 570,321 637,327 687,326 743,331 810,329 860,331',
        '194,343 260,348 313,346 380,353 427,352 493,355 520,354 573,349 620,350 687,343 747,344 803,340 859,344', 0, 0,
        '1352,219,338 153,272,340 154,323,337 175,373,340 178,425,336 180,478,338 181,530,337 173,583,335 163,634,337 164,684,333 165,735,337 161,785,335 152,836,336'],
    ['190,364 243,367 310,365 370,371 420,370 480,374 557,371 603,372 673,365 723,366 793,360 857,363',
        '188,394 243,397 310,393 367,394 427,386 480,387 557,382 617,384 673,383 727,389 773,388 856,394', 0, 0,
        '776,214,380 73,270,380 79,323,378 77,374,381 82,424,377 80,474,380 85,525,377 83,575,377 99,626,377 102,677,374 104,727,377 105,778,374 76,831,377'],
    ['194,413 217,414 270,407 320,408 397,403 473,407 527,407 593,413 640,412 707,416 787,413 827,414 859,411',
        '193,429 223,431 263,430 330,436 400,434 467,436 530,429 580,431 643,425 707,427 770,426 830,431 861,432', 0, 0,
        '1\u00a01,217,421 2,272,418 26,323,421 27,375,419 22,429,419 23,481,421 17,533,418 18,583,421 12,633,419 13,683,421 7,734,421 8,785,420 1,835,423'],
    ['199,448 217,449 263,453 320,451 380,458 440,456 500,459 570,454 623,455 680,448 740,449 803,444 866,448',
        '199,479 260,481 323,475 380,476 443,468 497,470 570,466 630,471 680,470 737,477 807,476 866,478', 0, 0,
        '899,224,464 86,280,466 92,331,463 90,381,466 95,431,462 93,482,463 100,533,462 101,584,461 97,634,462 96,684,459 107,736,462 108,788,460 89,841,461'],
    ['194,500 217,500 273,507 330,505 393,509 467,505 520,505 580,499 630,500 700,495 767,500 817,499 862,503',
        '196,525 220,523 273,524 333,519 403,521 467,518 530,524 573,521 637,528 700,526 767,529 827,522 860,523', 0, 0,
        '34,218,511 5,273,515 9,323,512 10,374,514 14,425,513 15,476,512 19,526,513 20,576,510 24,627,513 25,680,511 28,733,511 29,785,513 4,837,510'],
    [WIDE_TOP, BOX_BOTTOM, -2, 299,
        '1307,215,553 208,271,552 239,322,554 238,372,551 232,422,554 231,473,553 229,524,554 227,575,554 217,625,552 216,676,556 214,727,553 210,779,556 207,832,555'],
    [WIDE_TOP, BOX_BOTTOM, -1, 340,
        '1312,216,597 213,271,596 224,324,595 220,375,598 223,426,594 228,476,597 236,527,596 235,578,596 241,629,595 243,679,592 245,729,596 246,780,592 212,833,594'],
    [WIDE_TOP, WIDE_BOTTOM, -4, 377,
        '654,212,633 51,268,635 57,320,632 55,370,635 60,420,631 56,470,633 65,521,630 66,572,628 62,622,630 61,672,627 70,724,630 71,776,629 54,829,630'],
    [WIDE_TOP, WIDE_BOTTOM, -3, 417,
        '9112,215,674 109,269,674 115,322,672 113,373,675 118,423,671 116,474,674 121,524,672 119,575,671 145,626,672 146,676,669 148,726,672 149,778,668 112,830,671'],
    [WIDE_TOP, WIDE_BOTTOM, -2, 465,
        '432,215,722 33,271,721 248,323,720 249,374,723 251,425,720 242,475,723 48,525,720 49,576,720 43,627,720 44,678,717 38,728,720 39,779,716 32,832,719'],
    [WIDE_TOP, BOX_BOTTOM, 1, 507,
        '1324,219,762 141,274,761 139,325,764 142,375,761 143,426,764 136,477,762 135,528,763 134,578,764 131,628,761 130,679,765 126,730,762 123,782,765 124,835,764'],
    [WIDE_TOP, BOX_BOTTOM, 0, 553,
        '1305,218,808 198,273,806 199,324,809 195,375,806 196,425,810 192,476,808 193,526,810 188,577,811 189,627,808 203,677,812 201,729,808 204,781,811 205,834,811']
];

function drawStrips() {
    var g = document.getElementById('strips');
    strips.forEach(function (strip) {
        var top = points(strip[0], strip[2], strip[3]);
        var bottom = points(strip[1], strip[2], strip[3]).reverse();
        add(g, 'path', {
            'class': 'strip',
            d: 'M' + top[0] + curve(top) + 'L' + bottom[0] + curve(bottom) + 'Z'
        });
        strip[4].split(' ').forEach(function (item) {
            var n = item.split(',');
            add(g, 'text', {
                x: n[1],
                y: +n[2] + 4,
                transform: 'rotate(' + tilt(top, +n[1]) + ' ' + n[1] + ' ' + n[2] + ')'
            }, n[0]);
            add(g, 'circle', { cx: n[1] - 4, cy: n[2], r: n[0].length === 1 ? 2.5 : 1 });
        });
    });
}

var colors = ('000000 1a1a1a 333333 4d4d4d 666666 808080 999999 b3b3b3 cccccc e6e6e6 ececec f2f2f2 f9f9f9 ffffff ' +
    '800000 ff0000 808000 ffff00 008000 00ff00 008080 00ffff 000080 0000ff 800080 ff00ff ' +
    '2b0000 550000 800000 aa0000 d40000 ff0000 ff2a2a ff5555 ff8080 ffaaaa ffd5d5 ' +
    '280b0b 501616 782121 a02c2c c83737 d35f5f de8787 e9afaf f4d7d7 ' +
    '241c1c 483737 6c5353 916f6f ac9393 c8b7b7 e3dbdb ' +
    '2b1100 552200 803300 aa4400 d45500 ff6600 ff7f2a ff9955 ffb380 ffccaa ffe6d5 28170b 502d16 784421').split(' ');

function drawSwatches() {
    var html = '<button aria-label="None"><svg width="16" height="16"><rect width="16" height="16" fill="#fff"/>' +
        '<path d="M1 1L15 15M15 1L1 15" stroke="#800000" stroke-width="1.500"/></svg></button>';
    colors.forEach(function (c) {
        html += '<button aria-label="#' + c + '" style="background:#' + c + '"></button>';
    });
    document.getElementById('swatches').innerHTML = html;
}

drawRulers();
drawStrips();
drawSwatches();
```
